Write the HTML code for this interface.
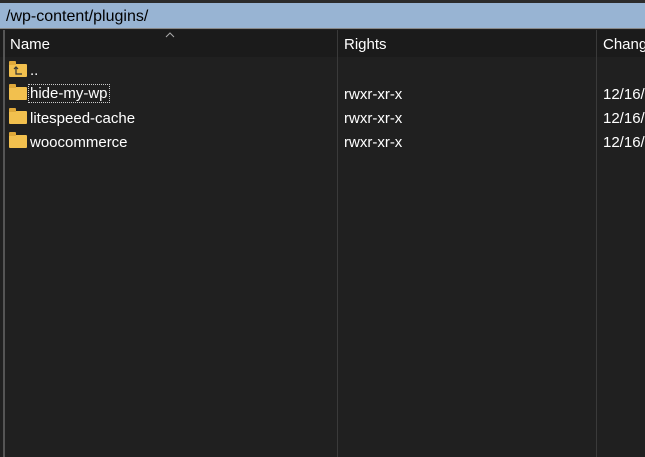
<!DOCTYPE html>
<html><head><style>
body{margin:0;width:645px;height:457px;background:#202020;overflow:hidden;font-family:"Liberation Sans",sans-serif;font-size:15px;color:#fff;position:relative}
.top{position:absolute;left:0;top:0;width:645px;height:3px;background:#2b2b2b}
.path{position:absolute;left:0;top:3px;width:645px;height:26px;background:#98b4d3;color:#000;font-size:16px;line-height:28px;padding-left:6px;box-sizing:border-box;border-bottom:1px solid #888}
.hdr{position:absolute;left:0;top:30px;width:645px;height:27px;background:#1b1b1b;line-height:30px}
.lb{position:absolute;left:3px;top:30px;width:2px;height:427px;background:#555}
.sep{position:absolute;top:30px;width:1px;height:427px;background:#3a3a3a}
.t{position:absolute;white-space:nowrap}
.f{position:absolute;left:9px;width:18px;height:13px;background:#f2c04e;border-radius:1px}
.f:before{content:"";position:absolute;left:0;top:-3px;width:7px;height:4px;background:#e0a93a;border-radius:1px 1px 0 0}
</style></head><body>
<div class="top"></div>
<div class="path">/wp-content/plugins/</div>
<div class="hdr">
<span class="t" style="left:10px">Name</span>
<span class="t" style="left:344px">Rights</span>
<span class="t" style="left:603px">Chang</span>
<svg style="position:absolute;left:165px;top:2px" width="10" height="6"><path d="M1 5 L5 1 L9 5" stroke="#aaa" fill="none"/></svg>
</div>
<div class="lb"></div>
<div class="sep" style="left:337px"></div>
<div class="sep" style="left:596px"></div>
<div class="f" style="top:64px"><svg style="position:absolute;left:4px;top:2px" width="10" height="10"><path d="M3 1 V8 H9 M1 3 L3 1 L5 3" stroke="#333" fill="none" stroke-width="1.2"/></svg></div>
<span class="t" style="left:30px;top:62px">..</span>
<div class="f" style="top:87px"></div>
<span class="t" style="left:29px;top:85px;outline:1px dotted #ccc;padding:0 1px">hide-my-wp</span>
<div class="f" style="top:111px"></div>
<span class="t" style="left:30px;top:110px">litespeed-cache</span>
<div class="f" style="top:135px"></div>
<span class="t" style="left:30px;top:134px">woocommerce</span>
<span class="t" style="left:344px;top:86px">rwxr-xr-x</span>
<span class="t" style="left:344px;top:110px">rwxr-xr-x</span>
<span class="t" style="left:344px;top:134px">rwxr-xr-x</span>
<span class="t" style="left:603px;top:86px">12/16/</span>
<span class="t" style="left:603px;top:110px">12/16/</span>
<span class="t" style="left:603px;top:134px">12/16/</span>
</body></html>
